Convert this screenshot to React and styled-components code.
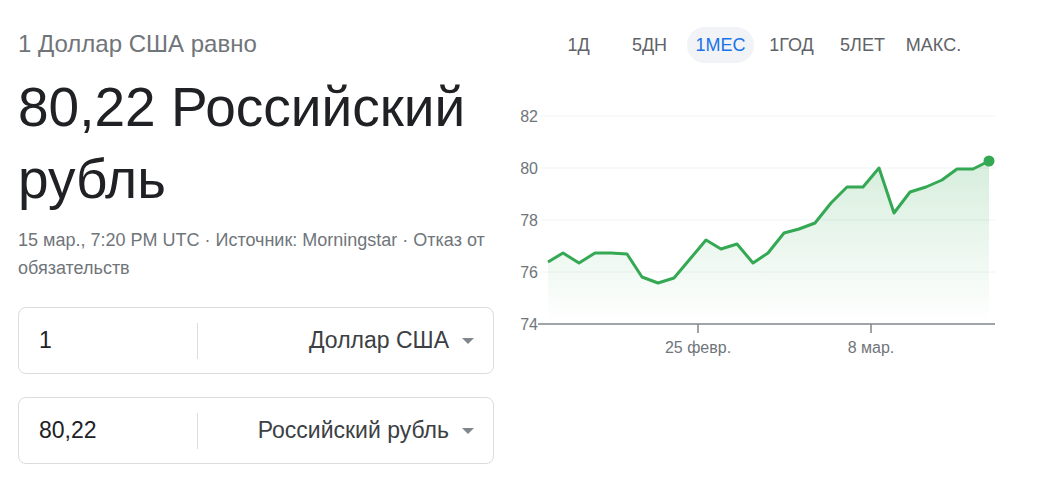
import styled, { createGlobalStyle } from "styled-components";

const GlobalStyle = createGlobalStyle`
  body {
    margin: 0;
    background: #fff;
    font-family: "Liberation Sans", Arial, sans-serif;
  }
`;

const points = [
  [548, 262], [563, 253], [579, 263], [595, 253], [611, 253], [627, 254],
  [642, 277], [658, 283], [674, 278], [690, 259], [706, 240], [721, 249],
  [737, 244], [753, 263], [768, 253], [784, 233], [799, 229], [815, 223],
  [831, 203], [847, 187], [863, 187], [879, 168], [894, 213], [910, 192],
  [926, 187], [942, 180], [957, 169], [973, 169], [989, 161],
];

const tabs = ["1Д", "5ДН", "1МЕС", "1ГОД", "5ЛЕТ", "МАКС."];

const Page = styled.main`
  display: flex;
  padding: 0 0 0 18px;
`;

const Left = styled.section`
  width: 476px;
  flex-shrink: 0;
`;

const Subtitle = styled.div`
  margin-top: 30px;
  font-size: 24px;
  line-height: 28px;
  color: #70757a;
`;

const BigValue = styled.div`
  margin-top: 13px;
  font-size: 55px;
  line-height: 72px;
  color: #202124;
`;

const Meta = styled.div`
  margin-top: 11px;
  font-size: 18px;
  line-height: 28px;
  color: #70757a;
`;

const Boxes = styled.div`
  margin-top: 25px;
  display: flex;
  flex-direction: column;
  gap: 23px;
`;

const Box = styled.div`
  height: 67px;
  box-sizing: border-box;
  border: 1px solid #dadce0;
  border-radius: 8px;
  display: flex;
  align-items: center;
`;

const Amount = styled.div`
  width: 179px;
  box-sizing: border-box;
  padding-left: 20px;
  font-size: 23px;
  color: #202124;
  border-right: 1px solid #dadce0;
  height: 36px;
  display: flex;
  align-items: center;
`;

const Currency = styled.div`
  flex: 1;
  display: flex;
  align-items: center;
  justify-content: flex-end;
  gap: 13px;
  padding-right: 19px;
  font-size: 23px;
  color: #3c4043;
`;

const Caret = styled.span`
  width: 0;
  height: 0;
  border-left: 6px solid transparent;
  border-right: 6px solid transparent;
  border-top: 6px solid #80868b;
`;

const Right = styled.section`
  margin-left: 16px;
  width: 490px;
`;

const TabRow = styled.div`
  margin-top: 27px;
  margin-left: 33px;
  display: grid;
  grid-template-columns: repeat(6, 71px);
`;

const TabCell = styled.div`
  display: flex;
  justify-content: center;
`;

const Tab = styled.div`
  height: 36px;
  padding: 0 8px;
  border-radius: 18px;
  display: flex;
  align-items: center;
  font-size: 18px;
  color: ${(p) => (p.$active ? "#1a73e8" : "#5f6368")};
  background: ${(p) => (p.$active ? "#f1f3f6" : "transparent")};
`;

const Chart = styled.svg`
  display: block;
  margin-top: 37px;
  font-family: "Liberation Sans", Arial, sans-serif;
`;

const OX = 510;
const OY = 100;

function RateChart() {
  const local = points.map(([x, y]) => [x - OX, y - OY]);
  const line = local.map(([x, y], i) => `${i ? "L" : "M"}${x} ${y}`).join(" ");
  const last = local[local.length - 1];
  const area = `${line} L${last[0]} 224 L${local[0][0]} 224 Z`;
  const grid = [
    [82, 16],
    [80, 68],
    [78, 120],
    [76, 172],
  ];
  return (
    <Chart width="490" height="260" viewBox="0 0 490 260">
      <defs>
        <linearGradient id="fill" x1="0" y1="0" x2="0" y2="1">
          <stop offset="0" stopColor="#34a853" stopOpacity="0.2" />
          <stop offset="1" stopColor="#34a853" stopOpacity="0" />
        </linearGradient>
      </defs>
      {grid.map(([v, y]) => (
        <g key={v}>
          <line x1="30" x2="485" y1={y} y2={y} stroke="#f1f3f4" strokeWidth="1" />
          <text x="28" y={y + 6} textAnchor="end" fontSize="16" fill="#70757a">
            {v}
          </text>
        </g>
      ))}
      <path d={area} fill="url(#fill)" />
      <line x1="28" x2="485" y1="224" y2="224" stroke="#80868b" strokeWidth="1.5" />
      <text x="28" y="230" textAnchor="end" fontSize="16" fill="#70757a">
        74
      </text>
      <line x1="188" x2="188" y1="224" y2="233" stroke="#80868b" strokeWidth="1.5" />
      <line x1="361" x2="361" y1="224" y2="233" stroke="#80868b" strokeWidth="1.5" />
      <text x="188" y="253" textAnchor="middle" fontSize="16" fill="#70757a">
        25 февр.
      </text>
      <text x="361" y="253" textAnchor="middle" fontSize="16" fill="#70757a">
        8 мар.
      </text>
      <path d={line} fill="none" stroke="#34a853" strokeWidth="3" strokeLinejoin="round" />
      <circle cx={last[0]} cy={last[1]} r="5.5" fill="#34a853" />
    </Chart>
  );
}

export default function App() {
  return (
    <>
      <GlobalStyle />
      <Page>
        <Left>
          <Subtitle>1 Доллар США равно</Subtitle>
          <BigValue>80,22 Российский рубль</BigValue>
          <Meta>
            15 мар., 7:20 PM UTC · Источник: Morningstar · Отказ от обязательств
          </Meta>
          <Boxes>
            <Box>
              <Amount>1</Amount>
              <Currency>
                Доллар США
                <Caret />
              </Currency>
            </Box>
            <Box>
              <Amount>80,22</Amount>
              <Currency>
                Российский рубль
                <Caret />
              </Currency>
            </Box>
          </Boxes>
        </Left>
        <Right>
          <TabRow>
            {tabs.map((t) => (
              <TabCell key={t}>
                <Tab $active={t === "1МЕС"}>{t}</Tab>
              </TabCell>
            ))}
          </TabRow>
          <RateChart />
        </Right>
      </Page>
    </>
  );
}
